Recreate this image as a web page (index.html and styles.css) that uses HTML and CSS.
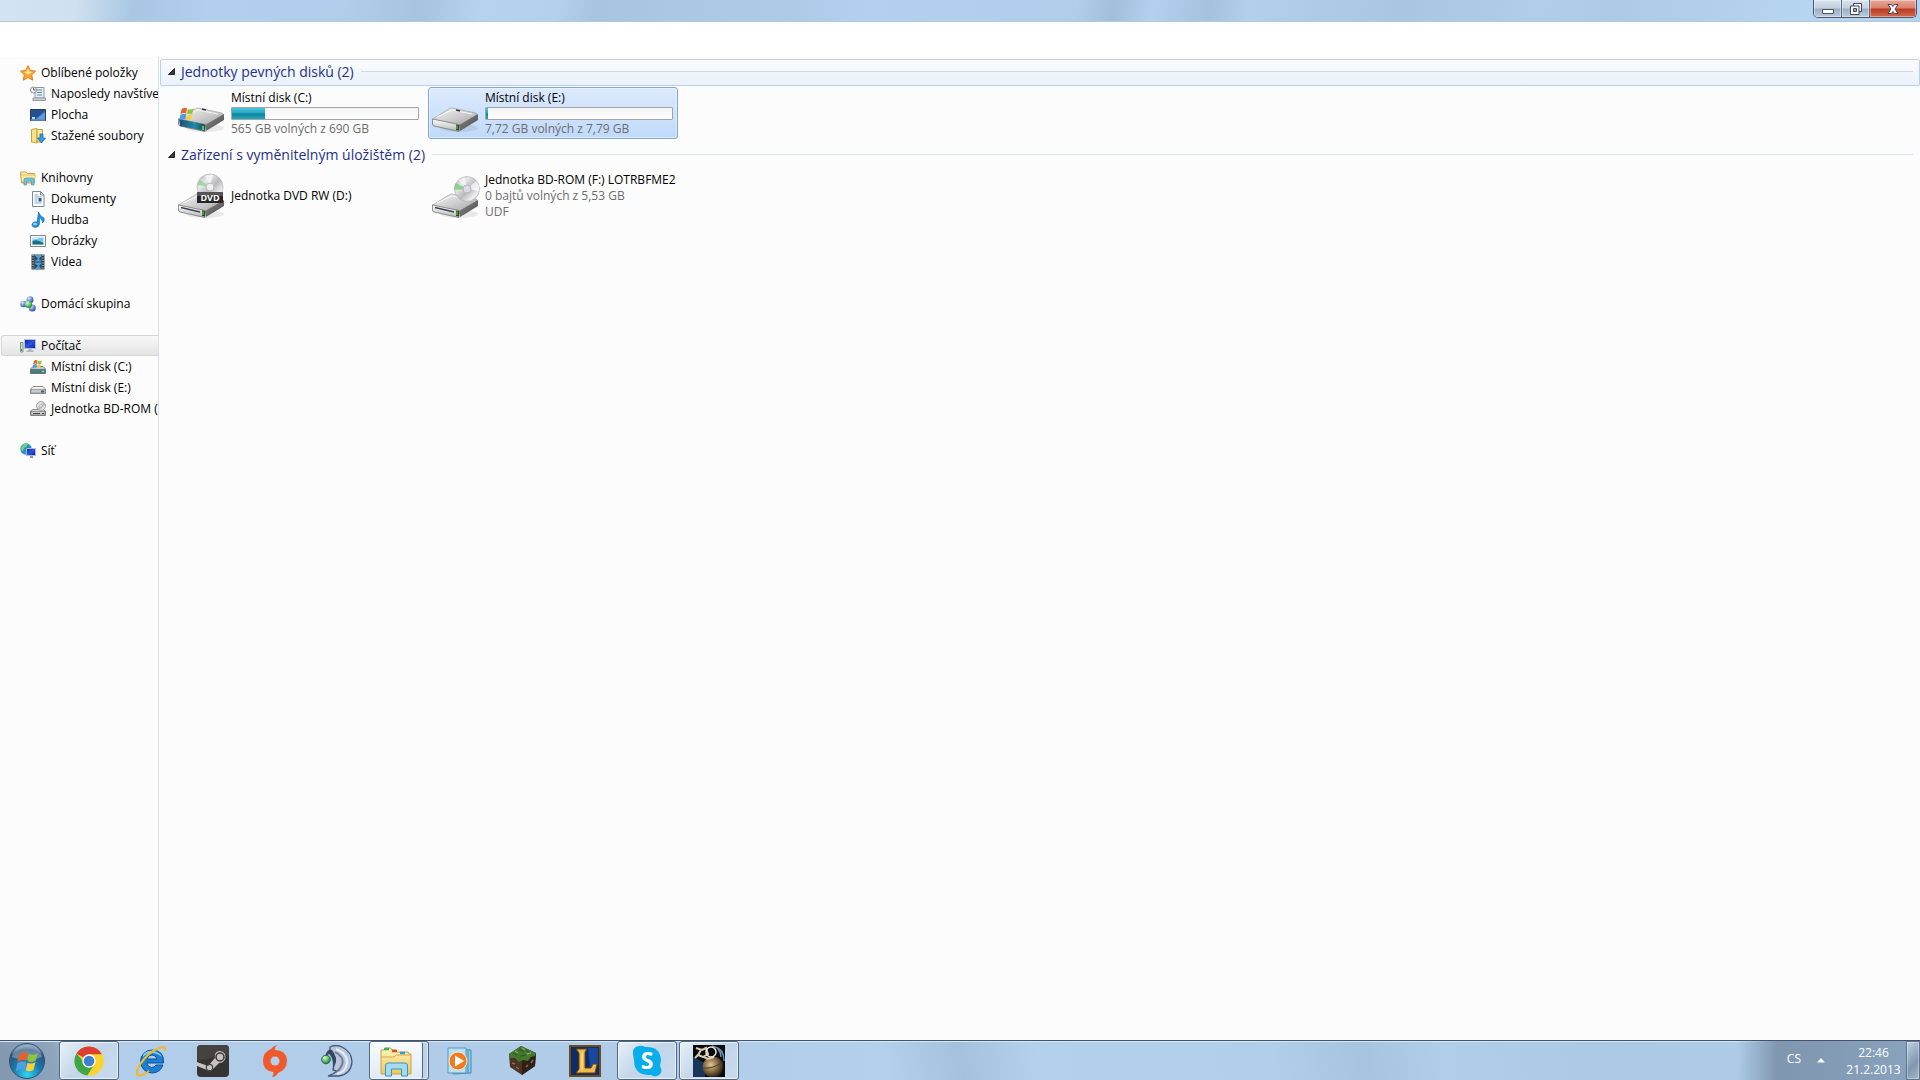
FILE: index.html
```html
<!DOCTYPE html>
<html lang="cs">
<head>
<meta charset="utf-8">
<title>Počítač</title>
<link rel="stylesheet" href="styles.css">
</head>
<body>
<svg class="defs" aria-hidden="true">
  <defs>
    <linearGradient id="metal" x1="0" y1="0" x2="1" y2="1"><stop offset="0" stop-color="#f4f4f4"/><stop offset=".5" stop-color="#cfcfcf"/><stop offset="1" stop-color="#a2a2a2"/></linearGradient>
    <linearGradient id="side" x1="0" y1="0" x2="1" y2="1"><stop offset="0" stop-color="#8b8b8b"/><stop offset="1" stop-color="#484848"/></linearGradient>
    <linearGradient id="face" x1="0" y1="0" x2="0" y2="1"><stop offset="0" stop-color="#fff"/><stop offset="1" stop-color="#b5b5b5"/></linearGradient>
    <linearGradient id="teal" x1="0" y1="0" x2="1" y2="0"><stop offset="0" stop-color="#234a78"/><stop offset=".6" stop-color="#1f8aa5"/><stop offset="1" stop-color="#1c4a50"/></linearGradient>
    <linearGradient id="disc" x1="0" y1="0" x2="1" y2="1"><stop offset="0" stop-color="#a9a9a9"/><stop offset=".3" stop-color="#e9e9e9"/><stop offset=".55" stop-color="#b9b9bd"/><stop offset=".8" stop-color="#f1f1f1"/><stop offset="1" stop-color="#999"/></linearGradient>
    <linearGradient id="paper" x1="0" y1="0" x2="0" y2="1"><stop offset="0" stop-color="#fff3b8"/><stop offset="1" stop-color="#edc75f"/></linearGradient>
    <linearGradient id="screen" x1="0" y1="0" x2="1" y2="1"><stop offset="0" stop-color="#0a1fa8"/><stop offset=".5" stop-color="#2b55e0"/><stop offset="1" stop-color="#0a1fa0"/></linearGradient>
    <radialGradient id="orb" cx=".5" cy=".9" r=".9"><stop offset="0" stop-color="#2fd6f5"/><stop offset=".45" stop-color="#1a78ad"/><stop offset=".8" stop-color="#2c5478"/><stop offset="1" stop-color="#8fb2cc"/></radialGradient>
    <radialGradient id="ball" cx=".35" cy=".3" r=".7"><stop offset="0" stop-color="#d6e6ff"/><stop offset="1" stop-color="#2850a8"/></radialGradient>
    <radialGradient id="green" cx=".35" cy=".3" r=".7"><stop offset="0" stop-color="#d8ffd0"/><stop offset="1" stop-color="#15902a"/></radialGradient>
    <radialGradient id="bomb" cx=".4" cy=".4" r=".6"><stop offset="0" stop-color="#e0c795"/><stop offset=".5" stop-color="#8d744a"/><stop offset="1" stop-color="#2b2012"/></radialGradient>
    <symbol id="flag" viewBox="0 0 20 20">
      <path d="M3 4Q7 1 10 3L9 10Q6 8 1 11Z" fill="#e8602c"/>
      <path d="M11 3.500Q14 6 19 3L17 10Q13 12 10 10Z" fill="#8fc43f"/>
      <path d="M1 12Q5 9 9 11L8 18Q4 16 0 19Z" fill="#4aa0e0"/>
      <path d="M10 11.500Q13 13 17 11L15 18Q11 20 8.500 18Z" fill="#fbcf3c"/>
    </symbol>
    <symbol id="drive" viewBox="0 0 48 28">
      <ellipse cx="27" cy="21" rx="19" ry="4" fill="#000" opacity=".08"/>
      <path d="M0.500 12L17 2Q18 1 20 1L44 6Q46 7 45 8L28 18Q27 19 25 18Z" fill="url(#metal)" stroke="#999" stroke-width=".6"/>
      <path d="M27 18L46 7V13L28 24Z" fill="url(#side)"/>
      <path d="M.5 12L27 17.500V24.500L2 19Q.5 18.500 .5 17Z" fill="url(#face)" stroke="#777" stroke-width=".8"/>
      <path d="M24 17.500L27 18V23.500L24 23Z" fill="#234d1c"/><path d="M25 18.500V22" stroke="#6cf04c"/>
      <path d="M5 10L20 3L40 7" fill="none" stroke="#fff" opacity=".8"/>
    </symbol>
    <symbol id="tile-hdd" viewBox="0 0 48 48">
      <use href="#drive" y="18" width="48" height="28"/><path d="M24 21l4 1" stroke="#333" stroke-width="1.500"/>
    </symbol>
    <symbol id="tile-system" viewBox="0 0 48 48">
      <use href="#drive" y="18" width="48" height="28"/>
      <path d="M1 30L27 35.500V42L2 37Z" fill="url(#teal)"/><path d="M25 37v4" stroke="#70f060" stroke-width="1.500"/>
      <path d="M24 20l4 1" stroke="#333" stroke-width="1.500"/>
      <use href="#flag" x="1" y="17" width="16" height="15"/>
    </symbol>
    <symbol id="tile-dvd" viewBox="0 0 48 48">
      <use href="#drive" y="21" width="48" height="28"/><path d="M3 35.500l19 4.500" stroke="#374258" stroke-width="1.500"/>
      <circle cx="32" cy="15" r="13" fill="url(#disc)" stroke="#aaa" stroke-width=".6"/>
      <path d="M32 15L20 13Q20 10 22 8Z" fill="#7cd68a" opacity=".7"/><path d="M32 15L27 4Q31 2 35 3Z" fill="#fff" opacity=".6"/><circle cx="32" cy="15" r="4" fill="#eee" stroke="#bbb"/>
      <path d="M19 20H45V31H19Z" fill="#252525"/><path d="M19 20H45V24H19Z" fill="#555"/>
      <text x="32" y="29" class="dvd-label">DVD</text>
    </symbol>
    <symbol id="tile-bd" viewBox="0 0 48 48">
      <use href="#drive" y="21" width="48" height="28"/><path d="M3 35.500l19 4.500" stroke="#374258" stroke-width="1.500"/>
      <circle cx="35" cy="17" r="12.500" fill="url(#disc)" stroke="#aaa" stroke-width=".6"/>
      <path d="M35 17L22.500 18Q22 14 24 11Z" fill="#6fcf7c" opacity=".8"/><path d="M35 17L44 9Q48 13 47 19Z" fill="#fff" opacity=".7"/><path d="M35 17L26 8Q30 5 33 5Z" fill="#fff" opacity=".5"/>
      <circle cx="35" cy="17" r="4" fill="#dcdce8" stroke="#b5b5c0"/>
    </symbol>
    <symbol id="star" viewBox="0 0 16 16"><path d="M8 .7L10.300 5.500L15.500 6.200L11.700 9.800L12.700 15.200L8 12.500L3.300 15.200L4.300 9.800L.5 6.200L5.700 5.500Z" fill="#f9a838" stroke="#e07b18"/><path d="M8 3L9.500 6.500L13 7L8 9.500L4 7L6.500 6.500Z" fill="#ffe58c"/></symbol>
    <symbol id="recent" viewBox="0 0 16 16"><path d="M5 1.500H14V12H5Z" fill="#e9eff5" stroke="#8d99a5"/><path d="M7 4h5M7 6.500h5M7 9h5" stroke="#5b83ad"/><path d="M3 12h12.500v2.500H3Z" fill="#cdd3d9" stroke="#909aa5"/><circle cx="3.500" cy="4" r="3" fill="#f6f6f6" stroke="#8a8a8a"/><path d="M3.500 2v2h2" fill="none" stroke="#555"/></symbol>
    <symbol id="desktop" viewBox="0 0 16 16"><path d="M.5 2.500H15.500V13.500H.5Z" fill="#2d62a8" stroke="#2a3c5c"/><path d="M1 3H15L6 11L1 13Z" fill="#285090"/><path d="M15 5V12H6Z" fill="#5d9be0"/><path d="M1 13h14" stroke="#88bce8"/><path d="M2 11h3" stroke="#aee3ff" stroke-width="2"/></symbol>
    <symbol id="download" viewBox="0 0 16 16"><path d="M1.500 1.500L7 .5V15L1.500 14Z" fill="#f9e08d" stroke="#c9a03c"/><path d="M7 1.500H12.500V14H7Z" fill="url(#paper)" stroke="#c9a03c"/><path d="M10 6h3v4h2.500L11.500 15L7.500 10H10Z" fill="#2e9ae8" stroke="#1266ac" stroke-width=".7"/></symbol>
    <symbol id="library" viewBox="0 0 16 16"><path d="M.5 2H6L7 3.500H14.500V13H1.500Z" fill="url(#paper)" stroke="#c9a344"/><path d="M1 5H15.500L14 12H2Z" fill="#fbe89d" stroke="#d0ac50" stroke-width=".6"/><path d="M4 15V10Q4 8 6 8H12Q14 8 14 10V15H11.500V11H6.500V15Z" fill="#6fc3e8" stroke="#3b8dba" stroke-width=".6"/></symbol>
    <symbol id="document" viewBox="0 0 16 16"><path d="M2.500.5H10.500L14 4V15.500H2.500Z" fill="#fff" stroke="#7d8896"/><path d="M10.500.5V4H14" fill="none" stroke="#7d8896"/><path d="M4.500 4h4M4.500 6h7M4.500 8h3M4.500 10h3M4.500 12h7" stroke="#7faad2"/><path d="M8.500 7h3v3.500h-3z" fill="#28588c"/></symbol>
    <symbol id="music" viewBox="0 0 16 16"><path d="M8.500 0Q10 4 14 6Q15 9 12.500 11Q12.500 7 9.500 6V12Q9 15 5.500 15.500Q1.500 15 2 12Q3 9 7 10Z" fill="#2490dc" stroke="#1669b0" stroke-width=".6"/><ellipse cx="5" cy="12" rx="2" ry="1.300" fill="#8cd6ff"/></symbol>
    <symbol id="picture" viewBox="0 0 16 16"><path d="M.5 2.500H15.500V13.500H.5Z" fill="#fff" stroke="#7c8792"/><path d="M2.500 4.500H13.500V11.500H2.500Z" fill="#7cc8ec"/><path d="M2.500 8Q7 6 13.500 10V11.500H2.500Z" fill="#1d6f82"/><path d="M3 6l5-1" stroke="#fff"/></symbol>
    <symbol id="video" viewBox="0 0 16 16"><path d="M1.500.5H14.500V15.500H1.500Z" fill="#3a4148"/><path d="M4.500 1H11.500V7.500H4.500ZM4.500 8.500H11.500V15H4.500Z" fill="#4f9fd0"/><path d="M3 1V15M13 1V15" stroke="#e6e6e6" stroke-width="1" stroke-dasharray="1 1.500"/><path d="M4.500 1L8 5L4.500 7ZM11.500 2L9 5L11.500 7ZM4.500 9L8 12L4.500 15ZM11.500 9L9 12L11.500 15Z" fill="#234a6c"/></symbol>
    <symbol id="homegroup" viewBox="0 0 16 16"><circle cx="3.500" cy="8" r="3.300" fill="url(#ball)"/><circle cx="10" cy="3.800" r="3.500" fill="url(#ball)"/><circle cx="12.300" cy="12" r="3.500" fill="url(#ball)"/><circle cx="8.500" cy="8.500" r="3.600" fill="url(#green)"/></symbol>
    <symbol id="computer" viewBox="0 0 16 16"><path d="M.5 4.500H3V14H.5Z" fill="#c8d4c8" stroke="#889488"/><path d="M1 12h1" stroke="#30b030" stroke-width="2"/><path d="M4.500 1.500H15.500V10.500H4.500Z" fill="url(#screen)" stroke="#b9c2d2"/><path d="M8.500 11h3v1.500h2v1.500h-7v-1.500h2z" fill="#aeb5c0"/></symbol>
    <symbol id="disk" viewBox="0 0 16 16"><path d="M3 6.500H13L15.500 9V13.500H.5V9Z" fill="#ededed" stroke="#8e9195"/><path d="M1 9.500H15V13H1Z" fill="#c8cbcf" stroke="#85898f" stroke-width=".7"/><path d="M11 11.500h3" stroke="#3c684c" stroke-width="2"/></symbol>
    <symbol id="disk-system" viewBox="0 0 16 16"><path d="M3 7.500H13L15.500 10V14.500H.5V10Z" fill="#b9cbd2" stroke="#75838b"/><path d="M1 10.500H15V14H1Z" fill="#467e8c" stroke="#4d6268" stroke-width=".7"/><path d="M12 12.500h2" stroke="#8bf080" stroke-width="1.500"/><use href="#flag" x="2" y="0" width="11" height="10"/></symbol>
    <symbol id="disk-bd" viewBox="0 0 16 16"><path d="M3 8.500H13L15.500 10V14.500H.5V10Z" fill="#e2e2e2" stroke="#858585"/><circle cx="11" cy="5" r="4.500" fill="url(#disc)" stroke="#8d8d8d" stroke-width=".7"/><circle cx="11" cy="5" r="1.300" fill="#fff" stroke="#888" stroke-width=".5"/><path d="M1 10.500H15V14H1Z" fill="#cdcdcd" stroke="#777" stroke-width=".7"/><path d="M3 12.500h7M12 12.500h2" stroke="#444"/></symbol>
    <symbol id="network" viewBox="0 0 16 16"><circle cx="6" cy="6" r="5.700" fill="#238fcc"/><path d="M2 3Q5-1 8 1Q7 4 4 5Q4 8 2 8Q0 6 2 3Z" fill="#71d07a"/><path d="M6.500 5.500H15.500V12.500H6.500Z" fill="url(#screen)" stroke="#aebbd0"/><path d="M10 13h3v2h-3z" fill="#8c98aa"/></symbol>
  </defs>
</svg>

<header class="titlebar">
  <div class="window-buttons">
    <button class="win-btn" aria-label="Minimalizovat"><svg width="14" height="14" viewBox="0 0 14 14"><path d="M1.500 7.500H12.500V11.500H1.500Z" fill="#fff" stroke="#4c5568"/></svg></button>
    <button class="win-btn" aria-label="Obnovit"><svg width="14" height="14" viewBox="0 0 14 14"><path d="M4.500 1.500H12.500V9.500H4.500Z" fill="#eef2f7" stroke="#3f475a"/><path d="M1.500 4H10V12.500H1.500Z" fill="#fff" stroke="#3f475a"/><path d="M4.500 6.500H7.500V9.500H4.500Z" fill="#9cacc2" stroke="#3f475a"/></svg></button>
    <button class="win-btn win-close" aria-label="Zavřít"><svg width="14" height="14" viewBox="0 0 14 14"><path d="M2 2.500H5.500L7 4.500L8.500 2.500H12L9 7L12 11.500H8.500L7 9.500L5.500 11.500H2L5 7Z" fill="#fff" stroke="#4a4550" stroke-width="1"/></svg></button>
  </div>
</header>
<div class="toolbar-space"></div>

<div class="explorer">
  <nav class="tree" aria-label="Navigační podokno">
    <ul>
      <li><a href="#"><svg class="ico"><use href="#star"/></svg>Oblíbené položky</a></li>
      <li class="child"><a href="#"><svg class="ico"><use href="#recent"/></svg>Naposledy navštívené</a></li>
      <li class="child"><a href="#"><svg class="ico"><use href="#desktop"/></svg>Plocha</a></li>
      <li class="child"><a href="#"><svg class="ico"><use href="#download"/></svg>Stažené soubory</a></li>
    </ul>
    <ul>
      <li><a href="#"><svg class="ico"><use href="#library"/></svg>Knihovny</a></li>
      <li class="child"><a href="#"><svg class="ico"><use href="#document"/></svg>Dokumenty</a></li>
      <li class="child"><a href="#"><svg class="ico"><use href="#music"/></svg>Hudba</a></li>
      <li class="child"><a href="#"><svg class="ico"><use href="#picture"/></svg>Obrázky</a></li>
      <li class="child"><a href="#"><svg class="ico"><use href="#video"/></svg>Videa</a></li>
    </ul>
    <ul>
      <li><a href="#"><svg class="ico"><use href="#homegroup"/></svg>Domácí skupina</a></li>
    </ul>
    <ul>
      <li class="current"><a href="#"><svg class="ico"><use href="#computer"/></svg>Počítač</a></li>
      <li class="child"><a href="#"><svg class="ico"><use href="#disk-system"/></svg>Místní disk (C:)</a></li>
      <li class="child"><a href="#"><svg class="ico"><use href="#disk"/></svg>Místní disk (E:)</a></li>
      <li class="child"><a href="#"><svg class="ico"><use href="#disk-bd"/></svg>Jednotka BD-ROM (F:)</a></li>
    </ul>
    <ul>
      <li><a href="#"><svg class="ico"><use href="#network"/></svg>Síť</a></li>
    </ul>
  </nav>

  <main class="content">
    <section>
      <h2 class="group focused"><svg class="arrow" viewBox="0 0 7 7"><path d="M6.500 .5V6.500H.5Z" fill="#3a3a3a" stroke="#222"/></svg>Jednotky pevných disků (2)</h2>
      <div class="tiles">
        <a class="tile" href="#">
          <svg class="tile-icon"><use href="#tile-system"/></svg>
          <span class="info"><span>Místní disk (C:)</span><span class="bar"><span class="fill" style="width:18%"></span></span><span class="meta">565 GB volných z 690 GB</span></span>
        </a>
        <a class="tile selected" href="#">
          <svg class="tile-icon"><use href="#tile-hdd"/></svg>
          <span class="info"><span>Místní disk (E:)</span><span class="bar"><span class="fill" style="width:1%"></span></span><span class="meta">7,72 GB volných z 7,79 GB</span></span>
        </a>
      </div>
    </section>
    <section>
      <h2 class="group"><svg class="arrow" viewBox="0 0 7 7"><path d="M6.500 .5V6.500H.5Z" fill="#3a3a3a" stroke="#222"/></svg>Zařízení s vyměnitelným úložištěm (2)</h2>
      <div class="tiles">
        <a class="tile" href="#">
          <svg class="tile-icon"><use href="#tile-dvd"/></svg>
          <span class="info"><span>Jednotka DVD RW (D:)</span></span>
        </a>
        <a class="tile" href="#">
          <svg class="tile-icon"><use href="#tile-bd"/></svg>
          <span class="info"><span>Jednotka BD-ROM (F:) LOTRBFME2</span><span class="meta">0 bajtů volných z 5,53 GB</span><span class="meta">UDF</span></span>
        </a>
      </div>
    </section>
  </main>
</div>

<footer class="taskbar">
  <button class="start" aria-label="Start"><svg width="38" height="38" viewBox="0 0 38 38"><circle cx="19" cy="19" r="17.500" fill="url(#orb)" stroke="#31506e"/><path d="M4 15Q6 3 19 3Q32 3 34 15Q19 21 4 15Z" fill="#fff" opacity=".28"/><use href="#flag" x="8" y="7" width="23" height="24"/></svg></button>
  <div class="apps">
    <button class="app open" aria-label="Google Chrome"><svg viewBox="0 0 32 32"><circle cx="16" cy="16" r="14.500" fill="#f9d02e"/><path d="M16 16L3.500 8.500A14.500 14.500 0 0 1 29 9.500H16Z" fill="#dc3f32"/><path d="M16 16L10 16L3.500 8.500A14.500 14.500 0 0 0 14.500 30.500L21 20Z" fill="#3fa648"/><path d="M16 9.500H29A14.500 14.500 0 0 1 14.500 30.500L21.500 20Z" fill="#fbd32e"/><circle cx="16" cy="16" r="6.700" fill="#fff"/><circle cx="16" cy="16" r="5.300" fill="#3f7fcd"/></svg></button>
    <button class="app" aria-label="Internet Explorer"><svg viewBox="0 0 32 32"><path d="M17 5A11.500 11.500 0 0 0 5.500 16.500A11.500 11.500 0 0 0 17 28Q25 28 28 20H21Q19.500 22.500 16.500 22.500Q12.500 22 12 18H28.500Q29.500 5.500 17 5ZM12 14Q13 10 17 10Q21 10 22 14Z" fill="#1d7fd0" stroke="#0d4f9c"/><path d="M8 10Q12 5 18 6Q25 7 27 12Q22 8 17 8Q12 8 8 12Z" fill="#7fd0f5"/><path d="M30 6Q31 0 24 3Q14 7 6 18Q-1 29 4 30.500Q8 31 14 26" fill="none" stroke="#f0b92c" stroke-width="2.200"/></svg></button>
    <button class="app" aria-label="Steam"><svg viewBox="0 0 32 32"><rect width="32" height="32" rx="4" fill="#353433"/><path d="M0 16L32 10V4Q32 0 28 0H4Q0 0 0 4Z" fill="#45423f"/><path d="M0 17L11 21L18 13Q17 6 23 6Q29 7 28.500 13Q27 18 22 18L16 24Q14 28 10 25L0 21Z" fill="#c6c3c0"/><circle cx="23" cy="12" r="4" fill="#c6c3c0" stroke="#333" stroke-width="1.500"/><circle cx="12.500" cy="22.500" r="3.200" fill="none" stroke="#444" stroke-width="1.200"/></svg></button>
    <button class="app" aria-label="Origin"><svg viewBox="0 0 32 32"><path d="M18 0Q15 3 16 5Q27 5 28 15Q28 25 19 28Q17 32 13 32Q15 29 14.500 27Q4 26 4 16Q4 7 12 4Q14 1 18 0Z" fill="#ee5a2b"/><circle cx="16" cy="16" r="4.500" fill="#b5d0eb"/></svg></button>
    <button class="app" aria-label="TeamSpeak"><svg viewBox="0 0 32 32"><path d="M9 2Q15-1 21 2Q31 7 31 17Q30 29 18 31H7Q13 29 16 26L12 25Q14 15 9 9Z" fill="#b9c6da" stroke="#41577a" stroke-width="1.300"/><path d="M15 4Q27 9 26 18Q25 27 16 29" fill="none" stroke="#e6edf6" stroke-width="2"/><path d="M14 7Q23 12 21.500 18Q20 24 15 27" fill="none" stroke="#6d7d98" stroke-width="2"/><path d="M4 11Q7 3 11 5Q16 12 15 17L12 25Q14 15 9 9Q6 9 6 12Z" fill="#344864"/><circle cx="5" cy="14.500" r="4.300" fill="url(#green)" stroke="#2c5f48"/></svg></button>
    <button class="app open active stacked" aria-label="Průzkumník Windows"><svg viewBox="0 0 32 32"><path d="M1 5H4L5 3H11L12 5H16L17 7H28L29 9H31V29H1Z" fill="url(#paper)" stroke="#c4a04a"/><path d="M4 4h5" stroke="#35b050" stroke-width="2.500"/><path d="M12 6h5" stroke="#d84c2c" stroke-width="2.500"/><path d="M20 8h5" stroke="#3399dd" stroke-width="2.500"/><path d="M1 12H14L16 10H31" fill="none" stroke="#d0a951"/><path d="M5.500 31V20Q6 18 8 18H25Q27 18 27.500 20V31H21.500V24H11.500V31Z" fill="#a2dbf2" stroke="#3e94bd"/></svg></button>
    <button class="app" aria-label="Windows Media Player"><svg viewBox="0 0 32 32"><path d="M8 4L26 5V28L8 29Z" fill="#92cbe8" stroke="#3f8bb4"/><path d="M3 3H21V28H3Z" fill="#b9dff0" stroke="#4e9ac0"/><path d="M23 5V28" stroke="#428cb3"/><circle cx="13" cy="16" r="9" fill="#f47a1d" stroke="#f9ead8"/><path d="M10 10.500L19 16L10 21.500Z" fill="#fff"/></svg></button>
    <button class="app" aria-label="Minecraft"><svg viewBox="0 0 32 32"><path d="M2 9L14 1L29 8L28 21L15 30L3 22Z" fill="#4b3423"/><path d="M15 15L29 8L28 21L15 30Z" fill="#2e2118"/><path d="M2 9L14 1L29 8L28 11L24 12L21 16L16 15L12 17L8 13L3 13Z" fill="#44772f"/><path d="M6 8l4 2M12 4l5 3M19 5l4 3M13 11l6-1" stroke="#345f24" stroke-width="1.500"/><path d="M5 18l3 1M9 22l3 2M19 22l2-2M24 18l2-3" stroke="#8b6c49" stroke-width="1.500"/><path d="M8 6l3 2M15 3l3 2M20 9l4-1" stroke="#7cb050" stroke-width="1.500"/></svg></button>
    <button class="app" aria-label="League of Legends"><svg viewBox="0 0 32 32"><path d="M1 1H31V31H1Z" fill="#0f2c68" stroke="#6d4e1b" stroke-width="2"/><path d="M19 3H29V20L21 24Z" fill="#1c5cba" opacity=".6"/><path d="M7 4H18L16 7V23H22L24 19H28L26 28H7L10 24V8Z" fill="#efbb4a" stroke="#6b4310"/><path d="M13 7V25" stroke="#fff0a8"/></svg></button>
    <button class="app open" aria-label="Skype"><svg viewBox="0 0 32 32"><path d="M2 9Q1 2 8 1Q11 0 14 2Q29 1 30 15L29 21Q33 28 26 31Q23 32 20 30Q3 31 3 15Z" fill="#08aeea"/><text x="16" y="24" class="skype-label">S</text></svg></button>
    <button class="app open" aria-label="Hra"><svg viewBox="0 0 32 32"><path d="M0 0H32V32H0Z" fill="#080a0d"/><path d="M0 12L12 18V32H0Z" fill="#24518a" opacity=".6"/><path d="M22 2Q31 4 31 16M19 1Q28 3 28 12" fill="none" stroke="#6e91af" stroke-width="1.500"/><circle cx="20" cy="22" r="10.500" fill="url(#bomb)"/><path d="M10 23Q20 24 30 17" fill="none" stroke="#4a3a20"/><path d="M3 3L9 5L13 3L15 9L10 12L5 10L2 13M8 5L5 10M11 12L15 14L21 12" fill="none" stroke="#d8cdb0" stroke-width="2"/><circle cx="18" cy="7" r="5" fill="none" stroke="#eee8d4" stroke-width="1.500"/></svg></button>
  </div>
  <div class="tray">
    <span class="lang">CS</span>
    <button class="tray-arrow" aria-label="Zobrazit skryté ikony"><svg width="8" height="5" viewBox="0 0 8 5"><path d="M0 4.500L4 0L8 4.500Z" fill="#fff"/></svg></button>
    <div class="clock"><span>22:46</span><span>21.2.2013</span></div>
    <button class="show-desktop" aria-label="Zobrazit plochu"></button>
  </div>
</footer>
</body>
</html>
```
FILE: styles.css
```css
* { box-sizing: border-box; }
body {
  margin: 0;
  min-height: 100vh;
  display: flex;
  flex-direction: column;
  background: #fff;
  color: #000;
  font: 12px/16px "Open Sans", "Noto Sans", sans-serif;
}
button { margin: 0; padding: 0; border: 0; background: none; font: inherit; }
a { color: inherit; text-decoration: none; }
.defs { position: absolute; width: 0; height: 0; }

/* Title bar */
.titlebar {
  height: 22px;
  display: flex;
  justify-content: flex-end;
  padding-right: 3px;
  border-bottom: 1px solid #b4c8dc;
  background: linear-gradient(100deg, #d3e3f2 0, #cfe0f0 4%, #a9c7e3 7%, #b2d0ed 11%, #b0cdea 18%, #a6c3e0 22%, #b5d3ef 25%, #b3d1ed 29%, #a7c4e0 31%, #aecce8 42%, #b3d1ee 45%, #b0cdea 56%, #a2bedb 58%, #b3d1ee 60%, #a4c1dd 63%, #b2cfec 65%, #a8c5e2 73%, #b0cdea 80%, #adcae6 84%, #b6d5f0 94%, #b3d2ef 100%);
}
.window-buttons {
  display: flex;
  height: 18px;
  border: 1px solid #4c586a;
  border-top: 0;
  border-radius: 0 0 5px 5px;
  overflow: hidden;
}
.win-btn {
  width: 28px;
  display: grid;
  place-items: center;
  border-right: 1px solid #5a687c;
  background: linear-gradient(#d9e3ee, #c3d0de 48%, #9dafc4 52%, #bccbdc);
  box-shadow: inset 0 0 0 1px #ffffff66;
}
.win-close {
  width: 46px;
  border-right: 0;
  background: linear-gradient(#e9a898, #d9806e 48%, #b93a24 52%, #d4694a);
}
.toolbar-space { height: 35px; }

/* Explorer window */
.explorer { flex: 1; display: flex; background: #fcfcfc; }
.tree {
  width: 159px;
  flex: none;
  padding-top: 5px;
  border-right: 1px solid #d6e0f0;
  overflow: hidden;
}
.tree ul { margin: 0 0 21px; padding: 0; list-style: none; }
.tree a {
  display: flex;
  align-items: center;
  gap: 5px;
  height: 21px;
  padding-left: 20px;
  white-space: nowrap;
  overflow: hidden;
}
.tree .child a { padding-left: 30px; }
.tree .current a {
  margin-left: 1px;
  padding-left: 18px;
  border: 1px solid #d5d5d5;
  border-right: 0;
  border-radius: 3px 0 0 3px;
  background: linear-gradient(#f8f8f8, #e4e4e4);
}
.ico { width: 16px; height: 16px; flex: none; }

.content { flex: 1; min-width: 0; padding: 2px 0 0 1px; }
.group {
  display: flex;
  align-items: center;
  height: 27px;
  margin: 0;
  padding: 0 6px 2px 7px;
  border: 1px solid transparent;
  border-radius: 2px;
  color: #1f3287;
  font-size: 14px;
  line-height: 20px;
  font-weight: 400;
}
.group::after { content: ""; flex: 1; height: 1px; margin-left: 7px; background: #dbe2ec; }
.group.focused { border-color: #bfcfe8; background: linear-gradient(#fbfcfe, #e9f1fb); }
.group.focused::after { background: #cbd9ea; }
.arrow { width: 7px; height: 7px; margin-right: 6px; }
.tiles { display: flex; flex-wrap: wrap; gap: 4px; padding: 1px 0 3px 14px; }
.tile {
  display: flex;
  align-items: center;
  gap: 5px;
  width: 250px;
  height: 52px;
  padding: 0 4px 0 3px;
  border: 1px solid transparent;
  border-radius: 3px;
  white-space: nowrap;
}
.tile.selected { border-color: #84a7d6; background: linear-gradient(#dceafc, #c0dafb); box-shadow: inset 0 0 0 1px #ffffff66; }
.tile-icon { width: 48px; height: 48px; flex: none; }
.info { flex: 1; display: flex; flex-direction: column; }
.meta { color: #6d6d6d; }
.bar {
  height: 13px;
  margin: 1px 0;
  border: 1px solid #a5a5a5;
  border-radius: 1px;
  background: linear-gradient(#f4f4f4, #fff);
}
.fill { display: block; height: 11px; background: linear-gradient(#4cc4dc, #21a5bf 48%, #087f99 52%, #23a9bc); }
.dvd-label { font: 700 9px "Open Sans", sans-serif; fill: #fff; text-anchor: middle; }
.skype-label { font: 700 23px "Open Sans", sans-serif; fill: #fff; text-anchor: middle; }

/* Taskbar */
.taskbar {
  height: 40px;
  display: flex;
  border-top: 1px solid #40556d;
  box-shadow: inset 0 1px 0 #d8e8f6;
  background: linear-gradient(80deg, #8398af 0, #8ea5bd 3%, #b1cde9 5%, #b0cce8 34%, #b3d0ec 46%, #a5c1de 50%, #b3d0ec 54%, #b1ceea 66%, #a6c3e0 71%, #b0cdea 75%, #abc8e4 84%, #b2d0ed 100%);
}
.start { width: 54px; display: grid; place-items: center; }
.apps { flex: 1; display: flex; gap: 2px; padding-left: 5px; }
.app { width: 60px; display: grid; place-items: center; border: 1px solid transparent; border-radius: 3px; }
.app svg { width: 32px; height: 32px; }
.app.open {
  border-color: #4f6780;
  background: linear-gradient(135deg, #e7eff8, #c2d5e9 50%, #c8dbee);
  box-shadow: inset 0 0 0 1px #ffffff99;
}
.app.active { background: linear-gradient(#f7fafd, #dfeaf5); }
.app.stacked { padding-right: 6px; border-right: 1px solid #4f6780; box-shadow: inset 0 0 0 1px #ffffff99, inset -5px 0 0 #bcd2e8, inset -6px 0 0 #4f6780; }
.tray {
  display: flex;
  align-items: center;
  color: #fff;
  padding-left: 40px;
  background: linear-gradient(90deg, transparent, #8097b0 40px, #8299b3 80px, #89a3be);
}
.lang { width: 24px; padding-bottom: 4px; text-align: right; }
.tray-arrow { width: 40px; height: 20px; display: grid; place-items: center; }
.clock { width: 65px; display: flex; flex-direction: column; align-items: center; line-height: 17px; }
.show-desktop {
  width: 14px;
  align-self: stretch;
  border: 1px solid #61768d;
  background: linear-gradient(135deg, #c2d0df, #7f97b1 60%, #a5b8cc);
  box-shadow: inset 0 0 0 1px #ffffff55;
}
```
